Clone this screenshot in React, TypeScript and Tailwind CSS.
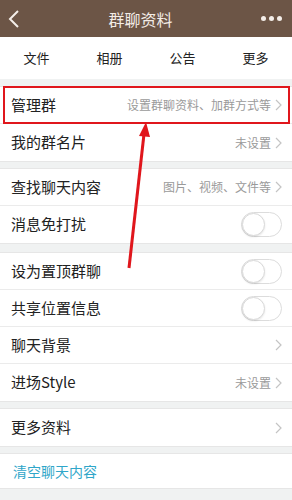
import React from "react";

const font = { fontFamily: '"Noto Sans CJK SC", "Noto Sans", sans-serif' };

function Chevron() {
  return (
    <svg width="7" height="12" viewBox="0 0 7 12" className="ml-1 shrink-0">
      <path d="M1 1 L6 6 L1 11" fill="none" stroke="#c4c4c4" strokeWidth="1.2" />
    </svg>
  );
}

function Toggle() {
  return (
    <div className="w-[41px] h-[25px] rounded-full border border-[#dcdcdc] bg-white relative">
      <div className="absolute left-0 top-0 w-[23px] h-[23px] rounded-full border border-[#d9d9d9] bg-white shadow-[0_1px_2px_rgba(0,0,0,0.1)]" />
    </div>
  );
}

type RowProps = { label: string; hint?: string; arrow?: boolean; toggle?: boolean; last?: boolean };

function Row({ label, hint, arrow, toggle, last }: RowProps) {
  return (
    <div className={"flex items-center h-[37px] pl-[11px] pr-[10px] bg-white " + (last ? "" : "border-b border-[#ebebeb]")}>
      <span className="text-[15px] text-[#222] flex-1">{label}</span>
      {hint && <span className="text-[12px] text-[#9a9a9a]">{hint}</span>}
      {arrow && <Chevron />}
      {toggle && <Toggle />}
    </div>
  );
}

export default function App() {
  return (
    <div className="relative w-[292px] h-[500px] overflow-hidden bg-[#f0f2f2]" style={font}>
      <div className="h-[37px] bg-[#6c5546] flex items-center justify-between px-[8px]">
        <svg width="12" height="20" viewBox="0 0 12 20">
          <path d="M10 2 L2 10 L10 18" fill="none" stroke="#f4eee9" strokeWidth="2" />
        </svg>
        <span className="text-[16px] text-[#f3ece6]">群聊资料</span>
        <div className="flex gap-[3px] pr-[2px]">
          <span className="w-[5px] h-[5px] rounded-full bg-[#f4eee9]" />
          <span className="w-[5px] h-[5px] rounded-full bg-[#f4eee9]" />
          <span className="w-[5px] h-[5px] rounded-full bg-[#f4eee9]" />
        </div>
      </div>
      <div className="h-[42px] bg-white grid grid-cols-4 items-center text-center text-[13px] text-[#222]">
        <span>文件</span>
        <span>相册</span>
        <span>公告</span>
        <span>更多</span>
      </div>

      <div className="mt-[7px] border-y border-[#e6e6e6]">
        <Row label="管理群" hint="设置群聊资料、加群方式等" arrow />
        <Row label="我的群名片" hint="未设置" arrow last />
      </div>

      <div className="mt-[6px] border-y border-[#e6e6e6]">
        <Row label="查找聊天内容" hint="图片、视频、文件等" arrow />
        <Row label="消息免打扰" toggle last />
      </div>

      <div className="mt-[8px] border-y border-[#e6e6e6]">
        <Row label="设为置顶群聊" toggle />
        <Row label="共享位置信息" toggle />
        <Row label="聊天背景" arrow />
        <Row label="进场Style" hint="未设置" arrow last />
      </div>

      <div className="mt-[6px] border-y border-[#e6e6e6]">
        <Row label="更多资料" arrow last />
      </div>

      <div className="mt-[6px] border-y border-[#e6e6e6] bg-white h-[36px] flex items-center pl-[13px]">
        <span className="text-[14px] text-[#2fa6c9]">清空聊天内容</span>
      </div>

      {/* annotation */}
      <div className="absolute left-[3px] top-[86px] w-[287px] h-[38px] border-2 border-[#e0161c]" />
      <svg className="absolute left-0 top-0" width="292" height="500" viewBox="0 0 292 500">
        <line x1="129" y1="268" x2="144" y2="134" stroke="#e0161c" strokeWidth="3" />
        <polygon points="146,122 139,136 150,137" fill="#e0161c" />
      </svg>
    </div>
  );
}
